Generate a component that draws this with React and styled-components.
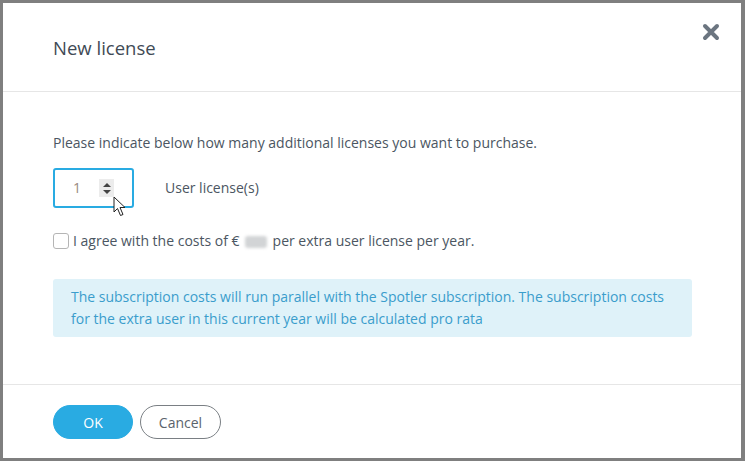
import React, { useState } from "react";
import styled, { createGlobalStyle } from "styled-components";

const GlobalStyle = createGlobalStyle`
  html, body {
    margin: 0;
    padding: 0;
    background: #7f7f7f;
  }
  body {
    font-family: "Open Sans", "Liberation Sans", sans-serif;
  }
`;

const Backdrop = styled.div`
  width: 745px;
  height: 461px;
  box-sizing: border-box;
  padding: 3px 4px 3px 3px;
  background: #7f7f7f;
`;

const Modal = styled.div`
  height: 100%;
  background: #fff;
  display: flex;
  flex-direction: column;
`;

const Header = styled.div`
  height: 89px;
  box-sizing: border-box;
  padding: 0 20px 0 50px;
  border-bottom: 1px solid #e6e6e6;
  display: flex;
  align-items: center;
  justify-content: space-between;
  position: relative;
`;

const Title = styled.h2`
  margin: 0;
  font-size: 18.5px;
  font-weight: 400;
  color: #3f4a55;
`;

const CloseButton = styled.button`
  position: absolute;
  top: 20px;
  right: 20px;
  width: 20px;
  height: 20px;
  padding: 0;
  border: none;
  background: transparent;
  cursor: pointer;
`;

const Body = styled.div`
  flex: 1;
  padding: 41px 50px 0 50px;
  color: #4b5662;
  font-size: 14px;
  line-height: 20px;
`;

const Intro = styled.p`
  margin: 0 0 15px 0;
`;

const AmountRow = styled.div`
  display: flex;
  align-items: center;
  gap: 31px;
`;

const InputWrap = styled.div`
  position: relative;
  width: 81px;
  height: 40px;
  box-sizing: border-box;
  border: 2px solid #29abe2;
  border-radius: 3px;
  display: flex;
  align-items: center;
  padding-left: 18px;
`;

const AmountValue = styled.span`
  color: #9a8a80;
  font-size: 14px;
  width: 26px;
`;

const Spinner = styled.div`
  width: 15px;
  height: 18px;
  background: #ececec;
  display: flex;
  flex-direction: column;
  align-items: center;
  justify-content: center;
  gap: 3px;
`;

const Arrow = styled.span`
  width: 0;
  height: 0;
  border-left: 4.5px solid transparent;
  border-right: 4.5px solid transparent;
  ${(p) =>
    p.$up
      ? "border-bottom: 4.5px solid #444;"
      : "border-top: 4.5px solid #444;"}
`;

const Pointer = styled.svg`
  position: absolute;
  left: 58px;
  top: 26px;
`;

const UnitLabel = styled.span`
  color: #4b5662;
`;

const AgreeRow = styled.label`
  display: flex;
  align-items: center;
  gap: 4px;
  margin-top: 23px;
  cursor: pointer;
`;

const Checkbox = styled.span`
  width: 14px;
  height: 14px;
  border: 1px solid #b5b5b5;
  border-radius: 3px;
  background: #fff;
`;

const Blurred = styled.span`
  display: inline-block;
  vertical-align: middle;
  width: 22px;
  height: 12px;
  margin: 0 6px 0 5px;
  background: #d2d4d6;
  border-radius: 3px;
  filter: blur(1.5px);
`;

const InfoBox = styled.div`
  margin-top: 28px;
  background: #dff2f9;
  border-radius: 3px;
  padding: 7px 18px 7px 18px;
  color: #3a9dcc;
  line-height: 22px;
  width: 639px;
  box-sizing: border-box;
`;

const Footer = styled.div`
  border-top: 1px solid #e6e6e6;
  height: 74px;
  padding: 20px 50px 0 50px;
  box-sizing: border-box;
  display: flex;
  gap: 7px;
`;

const PillButton = styled.button`
  height: 34px;
  width: ${(p) => (p.$primary ? "80px" : "81px")};
  border-radius: 17px;
  font-family: inherit;
  font-size: 14px;
  cursor: pointer;
  border: 1px solid ${(p) => (p.$primary ? "#29abe2" : "#7a7f84")};
  background: ${(p) => (p.$primary ? "#29abe2" : "#fff")};
  color: ${(p) => (p.$primary ? "#fff" : "#5a636c")};
`;

export default function App() {
  const [count] = useState(1);
  return (
    <>
      <GlobalStyle />
      <Backdrop>
        <Modal>
          <Header>
            <Title>New license</Title>
            <CloseButton aria-label="Close">
              <svg width="18" height="18" viewBox="0 0 18 18">
                <path
                  d="M3 3 L15 15 M15 3 L3 15"
                  stroke="#6b7580"
                  strokeWidth="4"
                  strokeLinecap="round"
                />
              </svg>
            </CloseButton>
          </Header>
          <Body>
            <Intro>
              Please indicate below how many additional licenses you want to
              purchase.
            </Intro>
            <AmountRow>
              <InputWrap>
                <AmountValue>{count}</AmountValue>
                <Spinner>
                  <Arrow $up />
                  <Arrow />
                </Spinner>
                <Pointer width="14" height="22" viewBox="0 0 14 22">
                  <path
                    d="M1 1 L1 16 L4.5 12.5 L7.5 19.5 L10 18.5 L7 11.5 L12 11.5 Z"
                    fill="#fff"
                    stroke="#222"
                    strokeWidth="1"
                    strokeLinejoin="round"
                  />
                </Pointer>
              </InputWrap>
              <UnitLabel>User license(s)</UnitLabel>
            </AmountRow>
            <AgreeRow>
              <Checkbox />
              <span>
                I agree with the costs of €<Blurred aria-label="amount" />per
                extra user license per year.
              </span>
            </AgreeRow>
            <InfoBox>
              The subscription costs will run parallel with the Spotler
              subscription. The subscription costs for the extra user in this
              current year will be calculated pro rata
            </InfoBox>
          </Body>
          <Footer>
            <PillButton $primary>OK</PillButton>
            <PillButton>Cancel</PillButton>
          </Footer>
        </Modal>
      </Backdrop>
    </>
  );
}
